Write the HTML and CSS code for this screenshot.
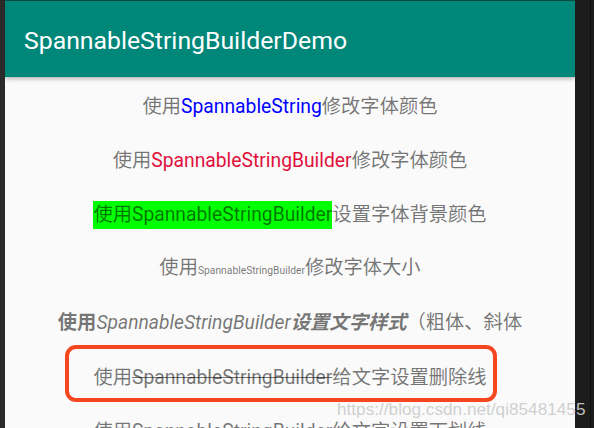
FILE: index.html
```html
<!DOCTYPE html>
<html>
<head>
<meta charset="utf-8">
<link rel="stylesheet" href="styles.css">
</head>
<body>
<div class="device">
  <div class="frame-left"></div>
  <div class="screen">
    <header class="toolbar"><span class="title">SpannableStringBuilderDemo</span></header>
    <main class="content">
      <div class="row"><p class="line">使用<span class="blue">SpannableString</span>修改字体颜色</p></div>
      <div class="row"><p class="line">使用<span class="red">SpannableStringBuilder</span>修改字体颜色</p></div>
      <div class="row"><p class="line"><span class="bg-green">使用SpannableStringBuilder</span>设置字体背景颜色</p></div>
      <div class="row"><p class="line">使用<span class="small">SpannableStringBuilder</span>修改字体大小</p></div>
      <div class="row"><p class="line"><b class="bold">使用</b><i class="italic">SpannableStringBuilder</i><b class="bold italic">设置文字样式</b>（粗体、斜体</p></div>
      <div class="row"><p class="line">使用<span class="strike">SpannableStringBuilder</span>给文字设置删除线</p></div>
      <div class="row"><p class="line">使用<span class="underline">SpannableStringBuilder</span>给文字设置下划线</p></div>
    </main>
    <div class="highlight"></div>
  </div>
  <div class="frame-right"><div class="frame-line"></div></div>
  <div class="watermark">https://blog.csdn.net/qi85481455</div>
</div>
</body>
</html>
```
FILE: styles.css
```css
html, body {
  margin: 0;
  padding: 0;
  width: 594px;
  height: 428px;
  overflow: hidden;
  background: #1c1c1c;
}
.device {
  position: relative;
  display: flex;
  width: 594px;
  height: 428px;
  font-family: Roboto, "Noto Sans CJK SC", sans-serif;
}
.frame-left {
  width: 5px;
  flex: none;
  background: #2a2a2a;
}
.screen {
  position: relative;
  width: 570px;
  flex: none;
  height: 428px;
  overflow: hidden;
  background: #fafafa;
  display: flex;
  flex-direction: column;
  border-top: 1px solid #0e4a44;
  box-sizing: border-box;
}
.frame-right {
  flex: 1;
  background: #1c1c1c;
  display: flex;
  justify-content: flex-end;
  padding-right: 3px;
}
.frame-line {
  width: 1px;
  background: #101010;
}
.toolbar {
  height: 76px;
  flex: none;
  background: #00877a;
  display: flex;
  align-items: center;
  padding-left: 19px;
  box-shadow: 0 2px 4px rgba(0,0,0,0.28);
  position: relative;
  z-index: 1;
}
.title {
  color: #ffffff;
  font-size: 24.8px;
  font-weight: 400;
  margin-top: 2px;
}
.content {
  display: flex;
  flex-direction: column;
  padding-top: 2px;
}
.row {
  height: 54.2px;
  flex: none;
  display: flex;
  align-items: center;
  justify-content: center;
}
.line {
  margin: 0;
  font-size: 19.3px;
  color: rgba(0,0,0,0.54);
  white-space: nowrap;
  line-height: 27px;
}
.blue { color: #0000ff; }
.red { color: #e0103c; }
.bg-green {
  background: #00ff00;
  padding: 2px 0 3px;
}
.small { font-size: 10.3px; }
.bold { font-weight: 700; }
.italic { font-style: italic; }
.strike { text-decoration: line-through; }
.underline { text-decoration: underline; }
.highlight {
  position: absolute;
  left: 60px;
  top: 344px;
  width: 432px;
  height: 57px;
  box-sizing: border-box;
  border: 4px solid #f6461f;
  border-radius: 11px;
}
.watermark {
  position: absolute;
  left: 337px;
  top: 399px;
  font-family: "Liberation Sans", sans-serif;
  font-size: 17.2px;
  color: rgba(205,205,205,0.95);
  white-space: nowrap;
}
```
